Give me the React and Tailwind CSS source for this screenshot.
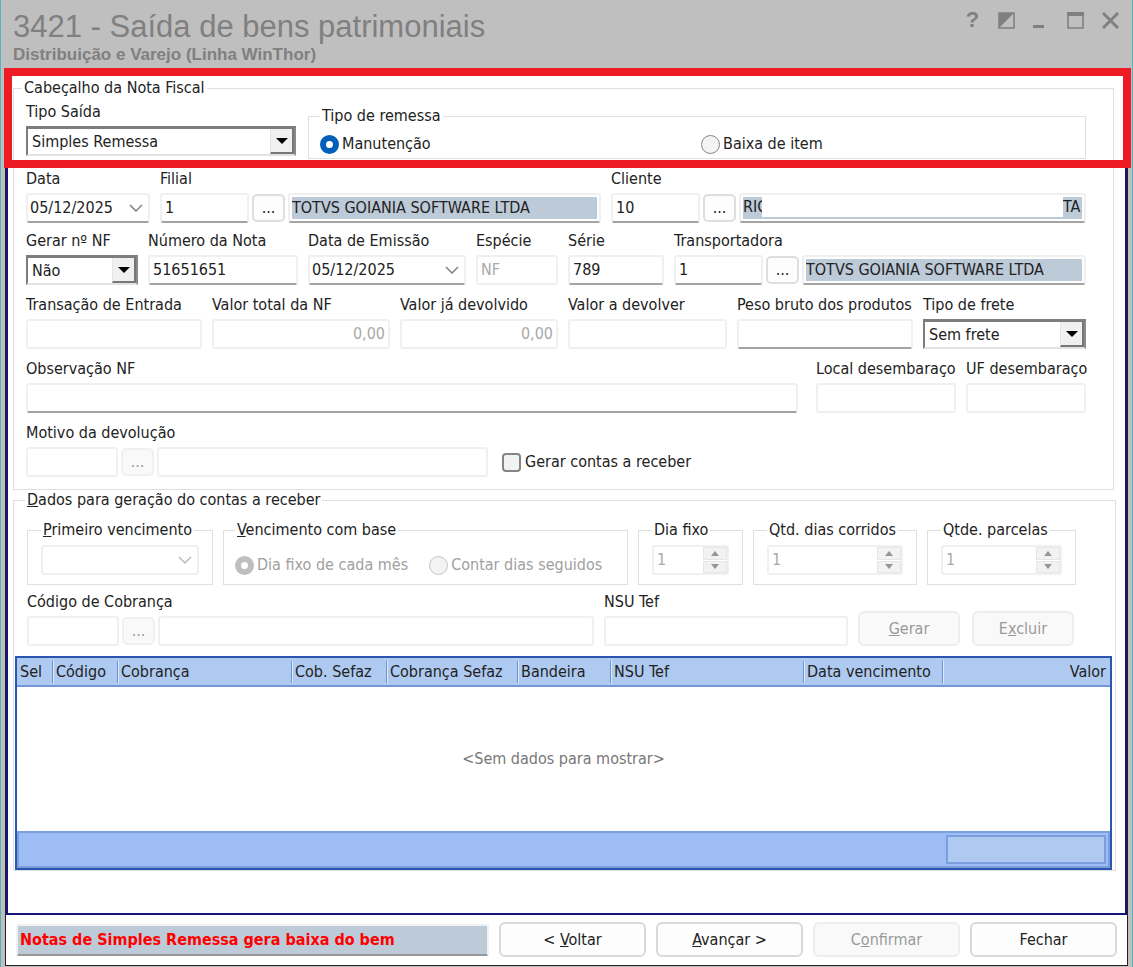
import React, { useId, useState } from 'react';
import clsx from 'clsx';

const COLUMNS = [
    { label: 'Sel', width: 'w-[36px]' },
    { label: 'Código', width: 'w-[65px]' },
    { label: 'Cobrança', width: 'w-[174px]' },
    { label: 'Cob. Sefaz', width: 'w-[95px]' },
    { label: 'Cobrança Sefaz', width: 'w-[131px]' },
    { label: 'Bandeira', width: 'w-[93px]' },
    { label: 'NSU Tef', width: '' },
    { label: 'Data vencimento', width: 'w-[139px]' },
    { label: 'Valor', width: 'w-[167px]', right: true },
];

const Chevron = ({ muted }) => (
    <svg width="14" height="8" viewBox="0 0 14 8" fill="none" stroke={muted ? '#b8b8b8' : '#7a7a7a'} strokeWidth="1.4">
        <path d="M1 1l6 6 6-6" />
    </svg>
);

const TextInput = ({ className, inputClass, highlight, disabled, ...props }) => (
    <div
        className={clsx(
            'flex h-[30px] min-w-0 rounded-[3px] border-2 border-[#f0f0f0] bg-white',
            highlight && 'p-[2px]',
            !disabled && 'border-b-[#a3a3a3]',
            className
        )}
    >
        <input
            type="text"
            disabled={disabled}
            className={clsx(
                'w-full min-w-0 outline-none',
                highlight ? 'bg-[#bdcad8] px-0' : 'bg-transparent px-[3px]',
                disabled ? 'text-[#a9a9a9]' : 'text-[#222]',
                inputClass
            )}
            {...props}
        />
    </div>
);

const DateInput = ({ id, disabled, label, ...props }) => (
    <div
        className={clsx(
            'flex h-[30px] items-center rounded-[3px] border-2 border-[#f0f0f0] bg-white pr-[5px]',
            !disabled && 'border-b-[#a3a3a3]'
        )}
    >
        <input id={id} type="text" aria-label={label} disabled={disabled} className="w-full min-w-0 bg-transparent pl-[2px] outline-none" {...props} />
        <button type="button" disabled={disabled} aria-label="Calendário" className="shrink-0">
            <Chevron muted={disabled} />
        </button>
    </div>
);

const SelectInput = ({ id, options }) => (
    <div className="relative h-[30px] border-2 border-t-[3px] border-[#e3e3e3] border-t-[#7d7d7d] border-l-[#7d7d7d] border-r-[#8a8a8a] bg-white">
        <select id={id} className="h-full w-full appearance-none bg-transparent pl-1 pr-6 outline-none">
            {options.map((option) => (
                <option key={option}>{option}</option>
            ))}
        </select>
        <span className="pointer-events-none absolute inset-y-0 right-0 flex w-6 items-center justify-center border-r-2 border-b-2 border-l border-[#777] border-l-[#e6e6e6] bg-[#f0f0f0]">
            <svg width="12" height="6" viewBox="0 0 12 6">
                <path d="M0 0h12l-6 6z" fill="#000" />
            </svg>
        </span>
    </div>
);

const Field = ({ label, className, children }) => {
    const id = useId();
    return (
        <div className={clsx('flex min-w-0 flex-col gap-1', className)}>
            <label htmlFor={id} className="h-5 whitespace-nowrap leading-5">{label}</label>
            {children(id)}
        </div>
    );
};

const LookupButton = ({ disabled, label }) => (
    <button
        type="button"
        disabled={disabled}
        aria-label={label}
        className={clsx(
            'h-7 w-[33px] shrink-0 rounded-[5px] border-2 leading-4',
            disabled ? 'border-[#f0f0f0] bg-[#f9f9f9] text-[#999]' : 'border-[#dedede] bg-[#fdfdfd] text-[#222]'
        )}
    >
        ...
    </button>
);

const Lookup = ({ id, code, name, text, disabled, wide, children }) => (
    <div className="flex items-center gap-[3px]">
        <TextInput id={id} defaultValue={code} disabled={disabled} className={wide ? 'w-[92px] shrink-0' : 'w-[89px] shrink-0'} />
        <LookupButton disabled={disabled} label={`Pesquisar ${name}`} />
        {children || (
            <TextInput aria-label={name} defaultValue={text} disabled={disabled} readOnly highlight={!!text} className="flex-1" />
        )}
    </div>
);

const GroupBox = ({ legend, legendClass, className, children }) => (
    <fieldset className={clsx('min-w-0 border border-[#dfdfdf]', className)}>
        <legend className={clsx('h-5 whitespace-nowrap px-[2px] leading-5', legendClass)}>{legend}</legend>
        {children}
    </fieldset>
);

const Radio = ({ children, disabled, className, ...props }) => (
    <label className={clsx('flex items-center gap-[3px] whitespace-nowrap leading-5', disabled && 'text-[#a0a0a0]', className)}>
        <input
            type="radio"
            disabled={disabled}
            className="size-[19px] shrink-0 appearance-none rounded-full border border-[#858585] bg-[#f3f3f3] checked:border-[6px] checked:border-[#005fb8] checked:bg-white disabled:border-[#c5c5c5] disabled:checked:border-[#bfbfbf]"
            {...props}
        />
        {children}
    </label>
);

const Spinner = ({ label }) => (
    <div className="flex h-[30px] rounded-[3px] border-2 border-[#f0f0f0] bg-white">
        <input type="text" aria-label={label} defaultValue="1" disabled className="w-full min-w-0 bg-transparent pl-[3px] text-[#a9a9a9]" />
        <div className="flex w-6 shrink-0 flex-col gap-px">
            <button type="button" disabled aria-label="Aumentar" className="flex flex-1 items-center justify-center border border-[#e6e6e6] bg-[#f2f2f2]">
                <svg width="8" height="5" viewBox="0 0 8 5"><path d="M4 0l4 5H0z" fill="#969696" /></svg>
            </button>
            <button type="button" disabled aria-label="Diminuir" className="flex flex-1 items-center justify-center border border-[#e6e6e6] bg-[#f2f2f2]">
                <svg width="8" height="5" viewBox="0 0 8 5"><path d="M0 0h8L4 5z" fill="#969696" /></svg>
            </button>
        </div>
    </div>
);

const Button = ({ children, disabled, className }) => (
    <button
        type="button"
        disabled={disabled}
        className={clsx(
            'h-[35px] shrink-0 rounded-[6px] border-2',
            disabled ? 'border-[#ededed] bg-[#f9f9f9] text-[#999]' : 'border-[#d9d9d9] bg-[#fdfdfd] text-[#222]',
            className
        )}
    >
        {children}
    </button>
);

const TitleBar = () => (
    <header className="flex h-[68px] justify-between pl-3 pr-[13px] text-[#808080]">
        <div className="pt-[9px] font-['Liberation_Sans',Arial,sans-serif]">
            <h1 className="text-[31px] leading-9">3421 - Saída de bens patrimoniais</h1>
            <p className="text-[17px] font-bold leading-5">Distribuição e Varejo (Linha WinThor)</p>
        </div>
        <div className="flex h-10 items-center gap-[18px]">
            <button type="button" aria-label="Ajuda" className="w-[15px] font-['Liberation_Sans',Arial,sans-serif] text-[22px] font-bold leading-6">?</button>
            <button type="button" aria-label="Tema">
                <svg width="17" height="17" viewBox="0 0 17 17">
                    <path d="M1 1h15v15H1z" fill="none" stroke="#808080" strokeWidth="1.6" />
                    <path d="M1 1h15L1 16z" fill="#808080" />
                </svg>
            </button>
            <button type="button" aria-label="Minimizar">
                <svg width="16" height="17" viewBox="0 0 16 17"><path d="M0 13h11v3H0z" fill="#808080" /></svg>
            </button>
            <button type="button" aria-label="Maximizar">
                <svg width="17" height="17" viewBox="0 0 17 17">
                    <path d="M1 1h15v15H1z" fill="none" stroke="#808080" strokeWidth="1.6" />
                    <path d="M0 0h17v4H0z" fill="#808080" />
                </svg>
            </button>
            <button type="button" aria-label="Fechar janela">
                <svg width="17" height="17" viewBox="0 0 17 17"><path d="M1 1l15 15M16 1L1 16" stroke="#808080" strokeWidth="3" /></svg>
            </button>
        </div>
    </header>
);

const InvoiceHeader = () => {
    const [remessa, setRemessa] = useState('manutencao');

    return (
        <GroupBox legend="Cabeçalho da Nota Fiscal" legendClass="-ml-1" className="mr-[11px] pr-[27px] pb-3 pl-3">
            <div className="mt-1 flex gap-3">
                <Field label="Tipo Saída" className="w-[270px] shrink-0">
                    {(id) => <SelectInput id={id} options={['Simples Remessa']} />}
                </Field>
                <GroupBox legend="Tipo de remessa" className="mt-1 flex-1 px-[11px] pb-1">
                    <div className="grid grid-cols-2 gap-x-2 pt-2">
                        <Radio name="remessa" checked={remessa === 'manutencao'} onChange={() => setRemessa('manutencao')}>
                            Manutenção
                        </Radio>
                        <Radio name="remessa" checked={remessa === 'baixa'} onChange={() => setRemessa('baixa')}>
                            Baixa de item
                        </Radio>
                    </div>
                </GroupBox>
            </div>

            <div className="mt-2.5 flex gap-2.5">
                <Field label="Data" className="w-[124px] shrink-0">
                    {(id) => <DateInput id={id} defaultValue="05/12/2025" />}
                </Field>
                <Field label="Filial" className="flex-13">
                    {(id) => <Lookup id={id} code="1" name="Filial" text="TOTVS GOIANIA SOFTWARE LTDA" />}
                </Field>
                <Field label="Cliente" className="flex-14">
                    {(id) => (
                        <Lookup id={id} code="10" name="Cliente">
                            <div className="flex h-[30px] min-w-0 flex-1 rounded-[3px] border-2 border-[#f0f0f0] border-b-[#a3a3a3] bg-white p-[2px]">
                                <div className="flex w-full min-w-0 bg-[#bdcad8] pb-[2px]">
                                    <input type="text" aria-label="Nome do cliente" readOnly defaultValue="RIC" className="w-[19px] outline-none" />
                                    <span className="flex-1 bg-white" />
                                    <input type="text" aria-label="Complemento do nome" readOnly defaultValue="TA" className="w-[19px] outline-none" />
                                </div>
                            </div>
                        </Lookup>
                    )}
                </Field>
            </div>

            <div className="mt-2 flex gap-2.5">
                <Field label="Gerar nº NF" className="w-[112px] shrink-0">
                    {(id) => <SelectInput id={id} options={['Não', 'Sim']} />}
                </Field>
                <Field label="Número da Nota" className="w-[150px] shrink-0">
                    {(id) => <TextInput id={id} defaultValue="51651651" />}
                </Field>
                <Field label="Data de Emissão" className="w-[158px] shrink-0">
                    {(id) => <DateInput id={id} defaultValue="05/12/2025" />}
                </Field>
                <Field label="Espécie" className="w-[82px] shrink-0">
                    {(id) => <TextInput id={id} defaultValue="NF" disabled />}
                </Field>
                <Field label="Série" className="w-[96px] shrink-0">
                    {(id) => <TextInput id={id} defaultValue="789" />}
                </Field>
                <Field label="Transportadora" className="flex-1">
                    {(id) => <Lookup id={id} code="1" name="Transportadora" text="TOTVS GOIANIA SOFTWARE LTDA" />}
                </Field>
            </div>

            <div className="mt-2.5 grid grid-cols-[176fr_178fr_158fr_159fr_176fr_163fr] gap-2.5">
                <Field label="Transação de Entrada">{(id) => <TextInput id={id} disabled />}</Field>
                <Field label="Valor total da NF">
                    {(id) => <TextInput id={id} defaultValue="0,00" disabled inputClass="text-right" />}
                </Field>
                <Field label="Valor já devolvido">
                    {(id) => <TextInput id={id} defaultValue="0,00" disabled inputClass="text-right" />}
                </Field>
                <Field label="Valor a devolver">{(id) => <TextInput id={id} disabled />}</Field>
                <Field label="Peso bruto dos produtos">{(id) => <TextInput id={id} />}</Field>
                <Field label="Tipo de frete">{(id) => <SelectInput id={id} options={['Sem frete']} />}</Field>
            </div>

            <div className="mt-2.5 flex gap-2.5">
                <Field label="Observação NF" className="mr-2 flex-1">{(id) => <TextInput id={id} />}</Field>
                <Field label="Local desembaraço" className="w-[140px] shrink-0">{(id) => <TextInput id={id} disabled />}</Field>
                <Field label="UF desembaraço" className="w-[120px] shrink-0">{(id) => <TextInput id={id} disabled />}</Field>
            </div>

            <div className="mt-2.5 flex items-end gap-[14px]">
                <Field label="Motivo da devolução" className="w-[462px]">
                    {(id) => <Lookup id={id} name="Motivo" disabled wide />}
                </Field>
                <label className="flex h-[30px] items-center gap-1 whitespace-nowrap">
                    <input
                        type="checkbox"
                        className="size-[19px] shrink-0 appearance-none rounded-[4px] border-2 border-[#858585] bg-[#f3f3f3] checked:bg-[#005fb8]"
                    />
                    Gerar contas a receber
                </label>
            </div>
        </GroupBox>
    );
};

const Receivables = () => (
    <GroupBox
        legend={<><u>D</u>ados para geração do contas a receber</>}
        legendClass="ml-2.5"
        className="mr-[9px] px-px"
    >
        <div className="mt-2.5 grid grid-cols-[186fr_405fr_105fr_164fr_149fr] gap-2.5 pr-[38px] pl-3">
            <GroupBox legend={<><u>P</u>rimeiro vencimento</>} className="px-[13px] pb-[9px]">
                <div className="pt-[5px]">
                    <DateInput label="Primeiro vencimento" disabled />
                </div>
            </GroupBox>
            <GroupBox legend={<><u>V</u>encimento com base</>} className="px-[11px]">
                <div className="flex gap-[21px] pt-[15px]">
                    <Radio name="base" disabled defaultChecked>Dia fixo de cada mês</Radio>
                    <Radio name="base" disabled>Contar dias seguidos</Radio>
                </div>
            </GroupBox>
            <GroupBox legend="Dia fixo" className="px-[13px]">
                <div className="pt-[5px]"><Spinner label="Dia fixo" /></div>
            </GroupBox>
            <GroupBox legend="Qtd. dias corridos" className="px-[13px]">
                <div className="pt-[5px]"><Spinner label="Qtd. dias corridos" /></div>
            </GroupBox>
            <GroupBox legend="Qtde. parcelas" className="px-[13px]">
                <div className="pt-[5px]"><Spinner label="Qtde. parcelas" /></div>
            </GroupBox>
        </div>

        <div className="mt-[7px] flex items-end gap-2.5 pr-10 pl-3">
            <Field label="Código de Cobrança" className="flex-1">
                {(id) => <Lookup id={id} name="Cobrança" disabled wide />}
            </Field>
            <Field label="NSU Tef" className="w-[244px] shrink-0">{(id) => <TextInput id={id} disabled />}</Field>
            <div className="flex gap-3">
                <Button disabled className="w-[102px]"><u>G</u>erar</Button>
                <Button disabled className="w-[102px]">E<u>x</u>cluir</Button>
            </div>
        </div>

        <div className="mt-2.5 mr-[2px] border-2 border-[#2a56ae] bg-white">
            <table className="w-full table-fixed border-collapse">
                <thead className="h-[28px] border-b-2 border-[#7596d6] bg-[#aecaf0]">
                    <tr>
                        {COLUMNS.map((col, i) => (
                            <th key={col.label} scope="col" className={clsx('p-0 font-normal', col.width)}>
                                <div
                                    className={clsx(
                                        'h-[22px] whitespace-nowrap pl-[3px] leading-[22px]',
                                        col.right ? 'pr-1 text-right' : 'text-left',
                                        i < COLUMNS.length - 1 && 'border-r border-[#6c93d3]',
                                        i > 0 && 'shadow-[inset_1px_0_0_#dce9fb]'
                                    )}
                                >
                                    {col.label}
                                </div>
                            </th>
                        ))}
                    </tr>
                </thead>
                <tbody>
                    <tr>
                        <td colSpan={COLUMNS.length} className="h-[145px] p-0 text-center text-[#777]">
                            &lt;Sem dados para mostrar&gt;
                        </td>
                    </tr>
                </tbody>
            </table>
            <div className="flex h-[37px] justify-end border-2 border-[#7a9ede] bg-[#9fbdf5] p-[2px]">
                <div className="h-[29px] w-[160px] border-2 border-[#7a9ede] bg-[#aecaf0]" />
            </div>
        </div>
    </GroupBox>
);

export default function App() {
    return (
        <div className="flex min-h-screen flex-col border-x border-[#55b3bf] bg-[#bfbfbf] pb-px font-['DejaVu_Sans_Condensed','DejaVu_Sans',Tahoma,sans-serif] text-base text-[#222]">
            <TitleBar />
            <div className="relative mx-1 flex flex-1 flex-col border border-t-0 border-[#222] bg-white">
                <main className="flex-1 border-x-2 border-b-2 border-[#15157a] pt-[10px] pb-10 pl-[5px]">
                    <InvoiceHeader />
                    <Receivables />
                </main>

                <footer className="flex items-center gap-[10px] pt-[7px] pr-[10px] pb-2 pl-2.5">
                    <div className="flex h-8 min-w-0 flex-1 rounded-[3px] border-2 border-[#f0f0f0] border-b-[#999]">
                        <p className="flex-1 whitespace-nowrap bg-[#bdcad8] pl-[2px] font-bold leading-7 text-[#f00]">
                            Notas de Simples Remessa gera baixa do bem
                        </p>
                    </div>
                    <Button className="w-[147px]">&lt; <u>V</u>oltar</Button>
                    <Button className="w-[147px]"><u>A</u>vançar &gt;</Button>
                    <Button disabled className="w-[147px]">C<u>o</u>nfirmar</Button>
                    <Button className="w-[147px]">Fechar</Button>
                </footer>

                {/* red marker around the shipment type fields */}
                <div className="pointer-events-none absolute top-0 -right-1 -left-[2px] h-[100px] border-8 border-[#ed1c24]" />
            </div>
        </div>
    );
}
